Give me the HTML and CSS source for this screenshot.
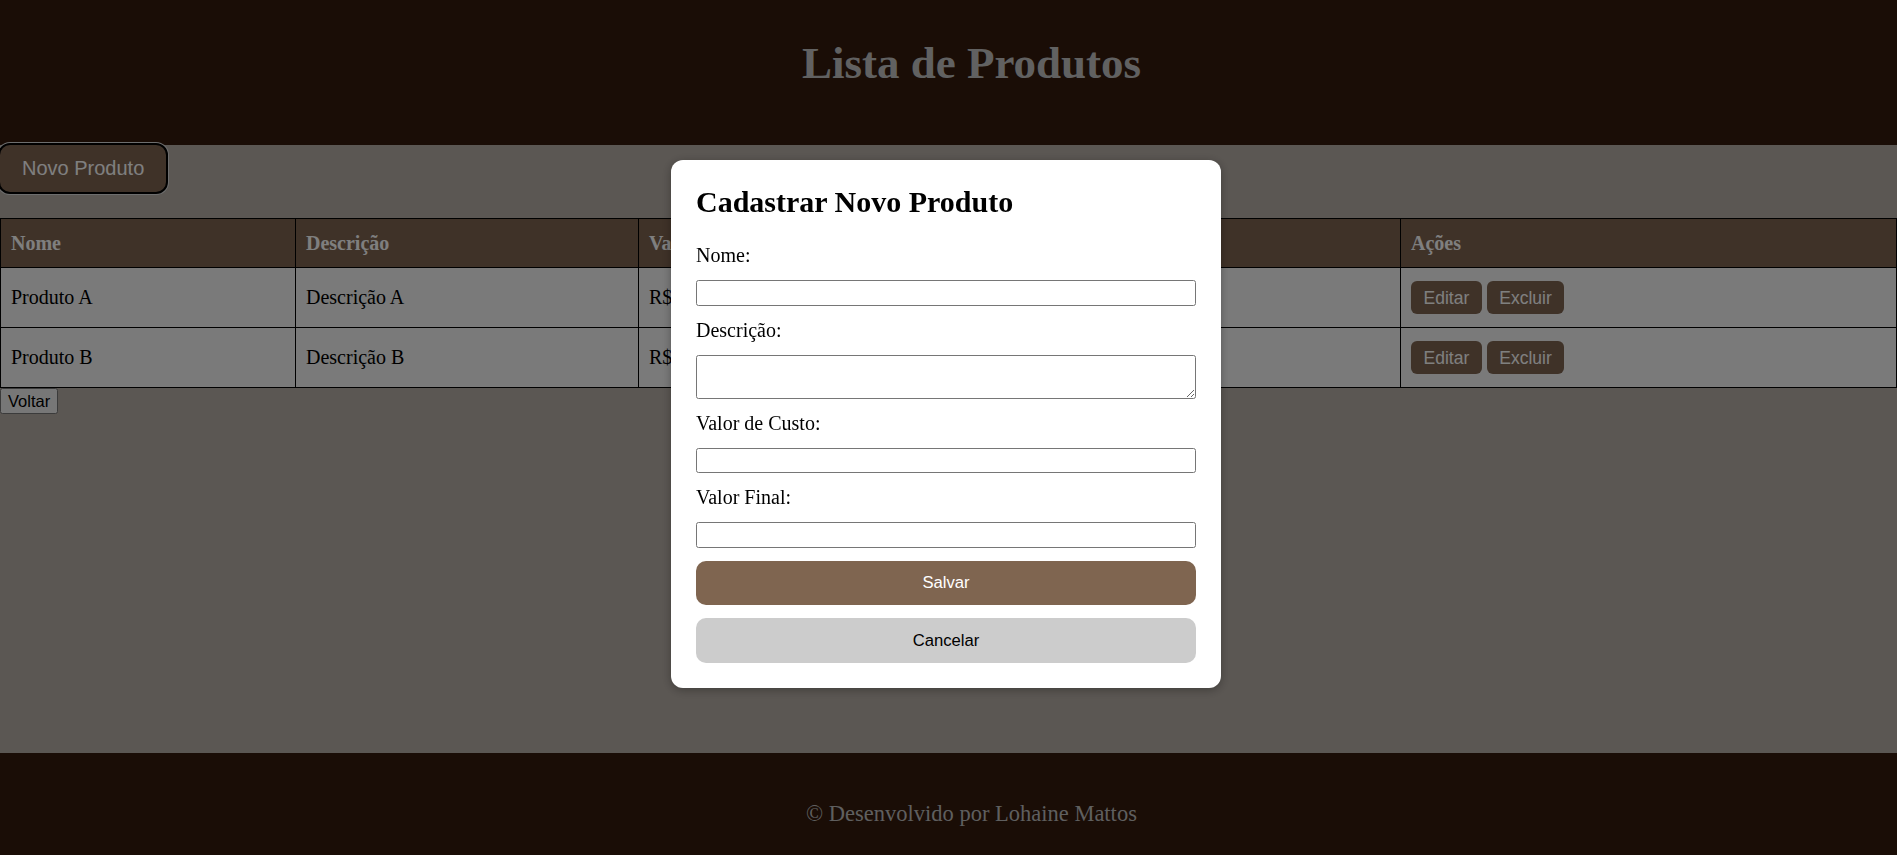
FILE: index.html
```html
<!DOCTYPE html>
<html lang="pt-BR">
<head>
<meta charset="utf-8">
<title>Lista de Produtos</title>
<link rel="stylesheet" href="styles.css">
</head>
<body>
<header class="site-header">
  <h1 class="page-title">Lista de Produtos</h1>
</header>
<main class="content">
  <button class="btn-new">Novo Produto</button>
  <table class="product-table">
    <colgroup>
      <col class="col-name">
      <col class="col-desc">
      <col class="col-cost">
      <col class="col-final">
      <col class="col-actions">
    </colgroup>
    <thead>
      <tr><th>Nome</th><th>Descrição</th><th>Valor de Custo</th><th>Valor Final</th><th>Ações</th></tr>
    </thead>
    <tbody>
      <tr>
        <td>Produto A</td><td>Descrição A</td><td>R$ 10,00</td><td>R$ 15,00</td>
        <td><button class="btn-action">Editar</button> <button class="btn-action">Excluir</button></td>
      </tr>
      <tr>
        <td>Produto B</td><td>Descrição B</td><td>R$ 20,00</td><td>R$ 30,00</td>
        <td><button class="btn-action">Editar</button> <button class="btn-action">Excluir</button></td>
      </tr>
    </tbody>
  </table>
  <button class="btn-back">Voltar</button>
</main>
<footer class="site-footer">
  <p class="footer-text">© Desenvolvido por Lohaine Mattos</p>
</footer>
<div class="overlay">
  <form class="modal">
    <h2 class="modal-title">Cadastrar Novo Produto</h2>
    <label class="field-label" for="nome">Nome:</label>
    <input class="field-input" id="nome" type="text">
    <label class="field-label" for="descricao">Descrição:</label>
    <textarea class="field-input field-textarea" id="descricao"></textarea>
    <label class="field-label" for="custo">Valor de Custo:</label>
    <input class="field-input" id="custo" type="text">
    <label class="field-label" for="final">Valor Final:</label>
    <input class="field-input" id="final" type="text">
    <button class="btn-modal btn-save" type="button">Salvar</button>
    <button class="btn-modal btn-cancel" type="button">Cancelar</button>
  </form>
</div>
</body>
</html>
```
FILE: styles.css
```css
* {
  box-sizing: border-box;
}

html, body {
  margin: 0;
  padding: 0;
}

body {
  font-family: "Liberation Serif", "Times New Roman", serif;
  background: #b6aea6;
}

.site-header {
  background: #341a0c;
  height: 145px;
  padding: 38px 0 0 46px;
  text-align: center;
}

.page-title {
  margin: 0;
  font-size: 45px;
  line-height: 51.75px;
  font-weight: bold;
  color: #c2c2c2;
}

.content {
  background: #b6aea6;
  height: 608px;
  display: flex;
  flex-direction: column;
  align-items: flex-start;
}

.btn-new {
  margin: -2px 0 0 -2px;
  font-family: "Liberation Sans", Arial, sans-serif;
  font-size: 20px;
  line-height: 23px;
  color: #ffffff;
  background: #7e6450;
  border: 2px solid #000000;
  border-radius: 12px;
  padding: 12px 22px;
  box-shadow: 0 0 0 1px #dddddd;
}

.product-table {
  align-self: stretch;
  width: 100%;
  margin-top: 24px;
  border-collapse: collapse;
  table-layout: fixed;
}

.col-name { width: 295px; }
.col-desc { width: 343px; }
.col-cost { width: 381px; }
.col-final { width: 381px; }

.product-table th,
.product-table td {
  border: 1px solid #000000;
  padding: 12.5px 10px;
  text-align: left;
  font-size: 20px;
  line-height: 23px;
}

.product-table td {
  padding-top: 13.25px;
  padding-bottom: 13.25px;
}

.product-table th {
  background: #7e6450;
  color: #ffffff;
  font-weight: bold;
}

.product-table td {
  background: #f4f4f4;
  color: #000000;
}

.btn-action {
  font-family: "Liberation Sans", Arial, sans-serif;
  font-size: 17.5px;
  line-height: 20px;
  padding: 6.25px 12.5px;
  border: none;
  border-radius: 6px;
  background: #7e6450;
  color: #ffffff;
}

.btn-back {
  font-family: "Liberation Sans", Arial, sans-serif;
  font-size: 16.5px;
  line-height: 19px;
  height: 26px;
  padding: 1px 7px;
  border: 1px solid #767676;
  border-radius: 2.5px;
  background: #efefef;
  color: #000000;
}

.site-footer {
  background: #341a0c;
  height: 102px;
  padding: 48px 0 0 46px;
  text-align: center;
}

.footer-text {
  margin: 0;
  font-size: 22.5px;
  line-height: 26px;
  color: #bebebe;
}

.overlay {
  position: fixed;
  inset: 0;
  background: rgba(0, 0, 0, 0.5);
  display: flex;
  align-items: center;
  justify-content: center;
}

.modal {
  width: 550px;
  margin: 0 5px 7px 0;
  padding: 25px;
  background: #ffffff;
  border-radius: 12px;
  box-shadow: 0 2px 10px rgba(0, 0, 0, 0.3);
  display: flex;
  flex-direction: column;
  gap: 13px;
}

.modal-title {
  margin: 0 0 11.6px;
  font-size: 30px;
  line-height: 34.5px;
  font-weight: bold;
  color: #000000;
}

.field-label {
  font-size: 20px;
  line-height: 23px;
  color: #000000;
}

.field-input {
  width: 100%;
  height: 25.5px;
  border: 1px solid #767676;
  border-radius: 2.5px;
  background: #ffffff;
  font-family: "Liberation Sans", Arial, sans-serif;
  font-size: 16.5px;
  padding: 1px 2px;
}

.field-textarea {
  height: 44px;
  resize: both;
  display: block;
}

.btn-modal {
  width: 100%;
  font-family: "Liberation Sans", Arial, sans-serif;
  font-size: 16.67px;
  line-height: 19px;
  padding: 12.85px;
  border: none;
  border-radius: 10px;
}

.btn-save {
  background: #7f6550;
  color: #ffffff;
}

.btn-cancel {
  background: #cccccc;
  color: #000000;
}
```
